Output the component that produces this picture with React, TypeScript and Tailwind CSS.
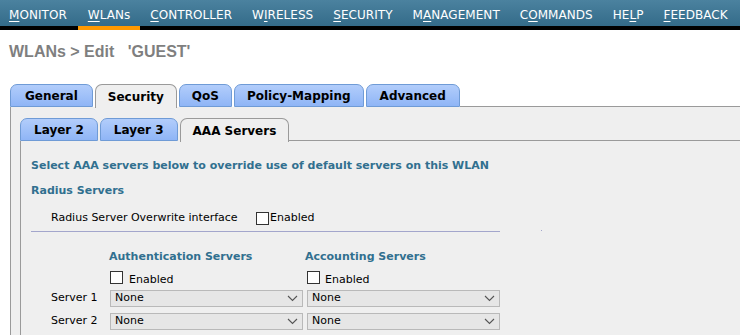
import React from "react";

const navItems: { pre: string; u: string; post: string; active?: boolean }[] = [
  { pre: "", u: "M", post: "ONITOR" },
  { pre: "", u: "W", post: "LANs", active: true },
  { pre: "", u: "C", post: "ONTROLLER" },
  { pre: "W", u: "I", post: "RELESS" },
  { pre: "", u: "S", post: "ECURITY" },
  { pre: "M", u: "A", post: "NAGEMENT" },
  { pre: "C", u: "O", post: "MMANDS" },
  { pre: "HE", u: "L", post: "P" },
  { pre: "", u: "F", post: "EEDBACK" },
];

const sans = { fontFamily: '"DejaVu Sans", Verdana, sans-serif' };

function Tab({ label, active, pad }: { label: string; active?: boolean; pad: string }) {
  return active ? (
    <div className={"h-[24px] -mb-px flex items-center rounded-t-[7px] border border-b-0 border-[#9a9a9a] bg-[#efefef] text-[12px] font-bold text-black " + pad}>
      {label}
    </div>
  ) : (
    <div className={"h-[23px] flex items-center rounded-t-[7px] border border-[#6f9bd6] bg-gradient-to-b from-[#b2cdfb] to-[#8fb5f6] text-[12px] font-bold text-black " + pad}>
      {label}
    </div>
  );
}

function Check() {
  return <span className="inline-block w-[13px] h-[13px] border border-[#333] bg-white" />;
}

function Select() {
  return (
    <div className="w-[193px] h-[17px] border border-[#b9b9b9] bg-[#e6e6e6] flex items-center pl-[4px] pr-[4px] text-[11px] text-black">
      <span className="flex-1">None</span>
      <svg width="11" height="7" viewBox="0 0 11 7" className="text-[#555]">
        <path d="M1 1 L5.5 5.5 L10 1" fill="none" stroke="currentColor" strokeWidth="1.1" />
      </svg>
    </div>
  );
}

export default function App() {
  return (
    <div className="w-[740px] h-[335px] overflow-hidden bg-white relative" style={sans}>
      {/* top nav */}
      <div className="flex bg-gradient-to-b from-[#4b829f] to-[#306886]">
        {navItems.map((n, i) => (
          <div
            key={i}
            className={
              "h-[30px] pt-[6px] text-[12px] tracking-[0.05px] text-white border-b-4 whitespace-nowrap " +
              (n.active ? "border-[#ff9900]" : "border-black") +
              (i === 0 ? " pl-[9px] pr-[11px]" : " px-[10px]")
            }
          >
            {n.pre}
            <span className="underline underline-offset-2">{n.u}</span>
            {n.post}
          </div>
        ))}
        <div className="flex-1 border-b-4 border-black" />
      </div>

      {/* title */}
      <div
        className="pl-[9px] pt-[10px] h-[54px] text-[16px] font-bold text-[#7f7f7f]"
        style={{ fontFamily: '"Liberation Sans", Arial, sans-serif' }}
      >
        WLANs &gt; Edit&nbsp;&nbsp;&nbsp;'GUEST'
      </div>

      {/* main tabs */}
      <div className="pl-[10px]">
        <div className="flex items-end gap-[2px]">
          <Tab label="General" pad="px-[14px]" />
          <Tab label="Security" active pad="px-[12px]" />
          <Tab label="QoS" pad="px-[12px]" />
          <Tab label="Policy-Mapping" pad="px-[12px]" />
          <Tab label="Advanced" pad="px-[13px]" />
          <div className="flex-1 border-b border-[#9a9a9a] -ml-[2px]" />
        </div>
        <div className="border-l border-[#9a9a9a] bg-[#efefef] pl-[9px] pt-[11px] h-[240px]">
          {/* sub tabs */}
          <div className="flex items-end gap-[2px]">
            <Tab label="Layer 2" pad="px-[13px]" />
            <Tab label="Layer 3" pad="px-[13px]" />
            <Tab label="AAA Servers" active pad="px-[12px]" />
            <div className="flex-1 border-b border-[#9a9a9a] -ml-[2px]" />
          </div>
          <div className="border-l border-[#9a9a9a] h-[200px] pl-[10px] pt-[18px]">
            <div className="text-[11px] font-bold text-[#31708f] leading-[14px]">
              Select AAA servers below to override use of default servers on this WLAN
            </div>
            <div className="mt-[11px] text-[11px] font-bold text-[#31708f] leading-[14px]">Radius Servers</div>
            <div className="mt-[13px] flex items-center text-[11px] text-black leading-[14px]">
              <span className="pl-[20px] w-[225px] whitespace-nowrap">Radius Server Overwrite interface</span>
              <Check />
              <span className="ml-[1px]">Enabled</span>
            </div>
            <div className="relative mt-[6px] h-px w-[469px] bg-[#a3a6cc]">
              <span className="absolute left-[510px] -top-px w-px h-px bg-[#a3a6cc]" />
            </div>
            <div className="mt-[18px] flex text-[11px] font-bold text-[#31708f] leading-[14px]">
              <span className="ml-[78px] w-[196px]">Authentication Servers</span>
              <span>Accounting Servers</span>
            </div>
            <div className="mt-[7px] flex items-center text-[11px] text-black leading-[14px]">
              <span className="ml-[79px]"><Check /></span>
              <span className="ml-[6px] w-[178px]">Enabled</span>
              <span><Check /></span>
              <span className="ml-[5px]">Enabled</span>
            </div>
            <div className="mt-[2px] flex items-center text-[11px] text-black">
              <span className="ml-[20px] w-[59px]">Server 1</span>
              <Select />
              <span className="w-[4px]" />
              <Select />
            </div>
            <div className="mt-[6px] flex items-center text-[11px] text-black">
              <span className="ml-[20px] w-[59px]">Server 2</span>
              <Select />
              <span className="w-[4px]" />
              <Select />
            </div>
          </div>
        </div>
      </div>
    </div>
  );
}
